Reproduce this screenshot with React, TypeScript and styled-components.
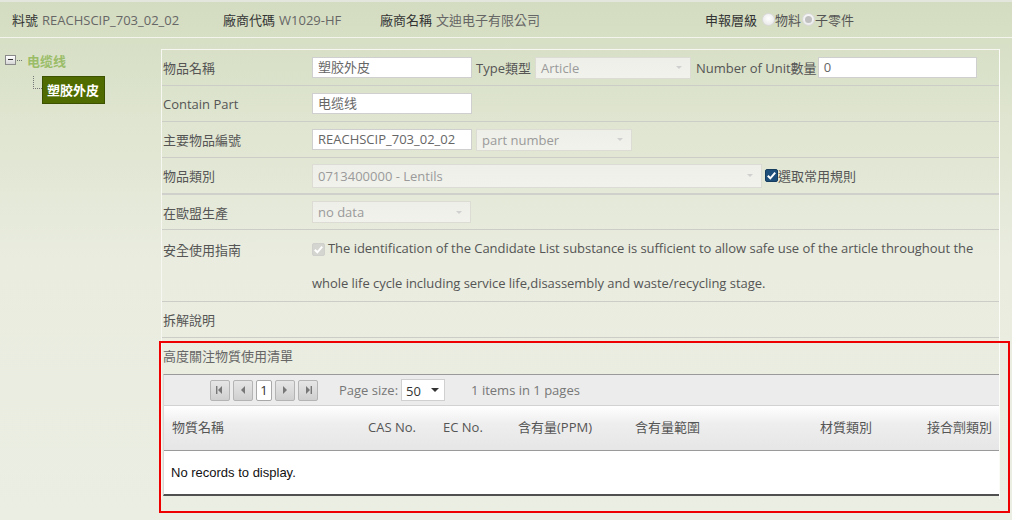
import React from 'react';
import styled, { createGlobalStyle } from 'styled-components';

const GlobalStyle = createGlobalStyle`
  html, body {
    margin: 0;
    padding: 0;
  }
  body {
    font-family: 'Open Sans', 'Noto Sans CJK TC', sans-serif;
    font-size: 13px;
    color: #666;
  }
`;

const Page = styled.div`
  width: 1012px;
  height: 520px;
  overflow: hidden;
  background: linear-gradient(180deg, #d3dcc0 0px, #dfe5d0 120px, #e9ecdf 260px, #ebeee2 520px);
`;

const TopBar = styled.div`
  height: 38px;
  display: flex;
  align-items: center;
  border-top: 2px solid #e3e6dc;
  border-bottom: 1px solid #f3f5ec;
  box-sizing: border-box;
`;

const TopItem = styled.div<{ w: number; pl?: number }>`
  width: ${(p) => p.w}px;
  padding-left: ${(p) => p.pl || 0}px;
  box-sizing: border-box;
  flex: none;
  white-space: nowrap;
  display: flex;
  align-items: center;
`;

const TopLabel = styled.span`
  color: #333;
  margin-right: 4px;
`;

const TopValue = styled.span`
  color: #666;
`;

const RadioGroup = styled.span`
  display: inline-flex;
  align-items: center;
  color: #555;
`;

const Radio = styled.span<{ checked?: boolean }>`
  width: 13px;
  height: 13px;
  border-radius: 50%;
  border: 1px solid #dadada;
  background: radial-gradient(circle at 50% 40%, #ffffff, #e4e4e4);
  margin: 0 0 0 1px;
  position: relative;
  box-sizing: border-box;
  &::after {
    content: '';
    display: ${(p) => (p.checked ? 'block' : 'none')};
    position: absolute;
    left: 2px;
    top: 2px;
    width: 7px;
    height: 7px;
    border-radius: 50%;
    background: #c0c0c0;
  }
`;

const Main = styled.div`
  display: flex;
  padding-top: 11px;
`;

const Tree = styled.div`
  width: 161px;
  flex: none;
  padding-top: 3px;
`;

const TreeRoot = styled.div`
  display: flex;
  align-items: center;
  padding-left: 5px;
  height: 16px;
`;

const Toggle = styled.span`
  width: 11px;
  height: 10px;
  box-sizing: border-box;
  border: 1px solid #8a8a8a;
  background: linear-gradient(180deg, #ffffff, #d6d6d6);
  position: relative;
  &::after {
    content: '';
    position: absolute;
    left: 2px;
    top: 3px;
    width: 5px;
    height: 1px;
    background: #333;
  }
`;

const Dots = styled.span<{ w: number }>`
  width: ${(p) => p.w}px;
  border-top: 1px dotted #777;
  margin: 0 5px 0 1px;
`;

const RootText = styled.span`
  color: #9bbd68;
  font-weight: bold;
  font-size: 13px;
`;

const TreeChild = styled.div`
  display: flex;
  align-items: flex-end;
  padding-left: 33px;
  margin-top: 8px;
`;

const Elbow = styled.span`
  width: 8px;
  height: 12px;
  border-left: 1px dotted #777;
  border-bottom: 1px dotted #777;
  margin-bottom: 15px;
`;

const SelectedNode = styled.span`
  background: #506c00;
  border: 1px solid #3c5200;
  color: #fff;
  font-weight: bold;
  padding: 4px 5px 3px 4px;
  font-size: 13px;
  line-height: 19px;
`;

const Panel = styled.div`
  width: 839px;
  flex: none;
  border-top: 1px solid #f6f7f1;
  border-left: 1px solid #f6f7f1;
  border-right: 1px solid #fbfbf7;
  box-sizing: border-box;
  padding-bottom: 3px;
`;

const Row = styled.div<{ h: number; thick?: boolean }>`
  display: grid;
  grid-template-columns: 150px 1fr;
  min-height: ${(p) => p.h}px;
  border-bottom: ${(p) => (p.thick ? '2px solid #cfcfcb' : '1px solid #cdcdc8')};
  box-sizing: border-box;
`;

const Label = styled.div`
  color: #555;
  display: flex;
  align-items: center;
  padding-left: 1px;
`;

const Field = styled.div`
  display: flex;
  align-items: center;
  gap: 4px;
`;

const Input = styled.div<{ w: number }>`
  width: ${(p) => p.w}px;
  height: 21px;
  box-sizing: border-box;
  border: 1px solid #cfcfcf;
  background: #fff;
  color: #666;
  padding: 0 5px;
  line-height: 19px;
  white-space: nowrap;
  overflow: hidden;
`;

const Select = styled.div<{ w: number; h?: number }>`
  width: ${(p) => p.w}px;
  height: ${(p) => p.h || 22}px;
  box-sizing: border-box;
  border: 1px solid #dcdcd4;
  background: linear-gradient(180deg, #eeefe8, #f1f2ec);
  color: #9a9a9a;
  padding: 0 5px;
  display: flex;
  align-items: center;
  justify-content: space-between;
  white-space: nowrap;
  &::after {
    content: '';
    border-left: 3px solid transparent;
    border-right: 3px solid transparent;
    border-top: 3px solid #d0d0d0;
    margin-right: 3px;
  }
`;

const InlineLabel = styled.span`
  color: #555;
  white-space: nowrap;
`;

const CheckBox = styled.span<{ dark?: boolean }>`
  width: 13px;
  height: 13px;
  flex: none;
  border-radius: 2px;
  background: ${(p) => (p.dark ? '#1d4f7a' : '#d4d4d0')};
  display: inline-flex;
  align-items: center;
  justify-content: center;
  box-sizing: border-box;
  border: 1px solid ${(p) => (p.dark ? '#163d5e' : '#cfcfcb')};
`;

const Guide = styled.div`
  line-height: 35px;
  color: #555;
  font-size: 13px;
  letter-spacing: -0.04px;
  padding-top: 1px;
`;

const GuideCheck = styled.span`
  display: inline-flex;
  vertical-align: -2px;
  margin-right: 3px;
`;

const Section = styled.div`
  position: relative;
  padding-top: 8px;
  &::after {
    content: '';
    position: absolute;
    left: -3px;
    right: -11px;
    top: 3px;
    height: 168px;
    border: 2px solid #ef0000;
    pointer-events: none;
  }
`;

const SectionTitle = styled.div`
  color: #666;
  padding-left: 1px;
  height: 20px;
  line-height: 20px;
  margin-bottom: 8px;
`;

const Grid = styled.div`
  margin-left: 1px;
  border-top: 1px solid #9a9a9a;
  border-left: 1px solid #d8d8d8;
  border-bottom: 2px solid #505050;
  background: #fff;
`;

const Pager = styled.div`
  height: 31px;
  background: #ececec;
  border-bottom: 1px solid #d2d2d2;
  display: flex;
  align-items: center;
  padding-left: 46px;
  box-sizing: border-box;
`;

const PagerButton = styled.span`
  width: 20px;
  height: 21px;
  box-sizing: border-box;
  border: 1px solid #b4b4b4;
  border-radius: 2px;
  background: linear-gradient(180deg, #e6e6e6, #cfcfcf);
  margin-right: 3px;
  display: inline-flex;
  align-items: center;
  justify-content: center;
`;

const PageNumber = styled.span`
  width: 16px;
  height: 21px;
  box-sizing: border-box;
  border: 1px solid #a8a8a8;
  border-radius: 2px;
  background: #fff;
  color: #333;
  margin-right: 3px;
  display: inline-flex;
  align-items: center;
  justify-content: center;
`;

const PagerText = styled.span<{ ml: number }>`
  margin-left: ${(p) => p.ml}px;
  color: #777;
  white-space: nowrap;
`;

const SizeSelect = styled.span`
  margin-left: 3px;
  width: 44px;
  height: 22px;
  box-sizing: border-box;
  border: 1px solid #d0d0d0;
  background: #fff;
  color: #333;
  display: inline-flex;
  align-items: center;
  justify-content: space-between;
  padding: 2px 5px 0 4px;
  &::after {
    content: '';
    border-left: 4px solid transparent;
    border-right: 4px solid transparent;
    border-top: 4px solid #333;
    margin-top: -2px;
  }
`;

const HeaderRow = styled.div`
  display: grid;
  grid-template-columns: 196px 75px 75px 117px 185px 107px 1fr;
  height: 45px;
  align-items: center;
  background: linear-gradient(180deg, #ffffff 0%, #eeeeee 40%, #e6e6e6 100%);
  border-bottom: 1px solid #9a9a9a;
  box-sizing: border-box;
  padding-bottom: 3px;
`;

const HeaderCell = styled.span`
  padding-left: 8px;
  color: #555;
  white-space: nowrap;
`;

const EmptyRow = styled.div`
  height: 43px;
  display: flex;
  align-items: center;
  padding-left: 7px;
  font-family: 'Liberation Sans', Arial, sans-serif;
  color: #111;
  font-size: 13px;
`;

const Arrow = ({ dir, bar }: { dir: 'left' | 'right'; bar?: boolean }) => (
  <svg width="10" height="10" viewBox="0 0 10 10">
    {dir === 'left' ? (
      <>
        {bar && <rect x="1" y="1" width="1.4" height="8" fill="#777" />}
        <polygon points="7,1 3,5 7,9" fill="#777" />
      </>
    ) : (
      <>
        <polygon points="3,1 7,5 3,9" fill="#777" />
        {bar && <rect x="7.6" y="1" width="1.4" height="8" fill="#777" />}
      </>
    )}
  </svg>
);

const Check = ({ color }: { color: string }) => (
  <svg width="11" height="11" viewBox="0 0 11 11">
    <path d="M1.8 5.8 L4.3 8.3 L9.2 2.6" fill="none" stroke={color} strokeWidth="2" />
  </svg>
);

const columns = ['物質名稱', 'CAS No.', 'EC No.', '含有量(PPM)', '含有量範圍', '材質類別', '接合劑類別'];

export default function App() {
  return (
    <Page>
      <GlobalStyle />
      <TopBar>
        <TopItem w={223} pl={12}>
          <TopLabel>料號</TopLabel>
          <TopValue>REACHSCIP_703_02_02</TopValue>
        </TopItem>
        <TopItem w={157}>
          <TopLabel>廠商代碼</TopLabel>
          <TopValue>W1029-HF</TopValue>
        </TopItem>
        <TopItem w={325}>
          <TopLabel>廠商名稱</TopLabel>
          <TopValue>文迪电子有限公司</TopValue>
        </TopItem>
        <TopItem w={200}>
          <TopLabel>申報層級</TopLabel>
          <RadioGroup>
            <Radio />
            物料
            <Radio checked />
            子零件
          </RadioGroup>
        </TopItem>
      </TopBar>
      <Main>
        <Tree>
          <TreeRoot>
            <Toggle />
            <Dots w={5} />
            <RootText>电缆线</RootText>
          </TreeRoot>
          <TreeChild>
            <Elbow />
            <SelectedNode>塑胶外皮</SelectedNode>
          </TreeChild>
        </Tree>
        <Panel>
          <Row h={36}>
            <Label>物品名稱</Label>
            <Field>
              <Input w={160}>塑胶外皮</Input>
              <InlineLabel>Type類型</InlineLabel>
              <Select w={156}>Article</Select>
              <InlineLabel style={{ marginLeft: 1 }}>Number of Unit數量</InlineLabel>
              <Input w={159} style={{ marginLeft: -3 }}>0</Input>
            </Field>
          </Row>
          <Row h={36}>
            <Label>Contain Part</Label>
            <Field>
              <Input w={160}>电缆线</Input>
            </Field>
          </Row>
          <Row h={36}>
            <Label>主要物品編號</Label>
            <Field>
              <Input w={160}>REACHSCIP_703_02_02</Input>
              <Select w={156}>part number</Select>
            </Field>
          </Row>
          <Row h={37} thick>
            <Label>物品類別</Label>
            <Field style={{ gap: 3 }}>
              <Select w={450} h={24}>0713400000 - Lentils</Select>
              <CheckBox dark>
                <Check color="#fff" />
              </CheckBox>
              <InlineLabel style={{ marginLeft: -3 }}>選取常用規則</InlineLabel>
            </Field>
          </Row>
          <Row h={35}>
            <Label>在歐盟生產</Label>
            <Field>
              <Select w={159}>no data</Select>
            </Field>
          </Row>
          <Row h={71}>
            <Label style={{ alignItems: 'flex-start', paddingTop: 10 }}>安全使用指南</Label>
            <Guide>
              <GuideCheck>
                <CheckBox>
                  <Check color="#fff" />
                </CheckBox>
              </GuideCheck>
              The identification of the Candidate List substance is sufficient to allow safe use of the article throughout the
              whole life cycle including service life,disassembly and waste/recycling stage.
            </Guide>
          </Row>
          <Row h={36}>
            <Label>拆解說明</Label>
            <div />
          </Row>
          <Section>
            <SectionTitle>高度關注物質使用清單</SectionTitle>
            <Grid>
              <Pager>
                <PagerButton>
                  <Arrow dir="left" bar />
                </PagerButton>
                <PagerButton>
                  <Arrow dir="left" />
                </PagerButton>
                <PageNumber>1</PageNumber>
                <PagerButton>
                  <Arrow dir="right" />
                </PagerButton>
                <PagerButton>
                  <Arrow dir="right" bar />
                </PagerButton>
                <PagerText ml={18}>Page size:</PagerText>
                <SizeSelect>50</SizeSelect>
                <PagerText ml={26}>1 items in 1 pages</PagerText>
              </Pager>
              <HeaderRow>
                {columns.map((c) => (
                  <HeaderCell key={c}>{c}</HeaderCell>
                ))}
              </HeaderRow>
              <EmptyRow>No records to display.</EmptyRow>
            </Grid>
          </Section>
        </Panel>
      </Main>
    </Page>
  );
}
